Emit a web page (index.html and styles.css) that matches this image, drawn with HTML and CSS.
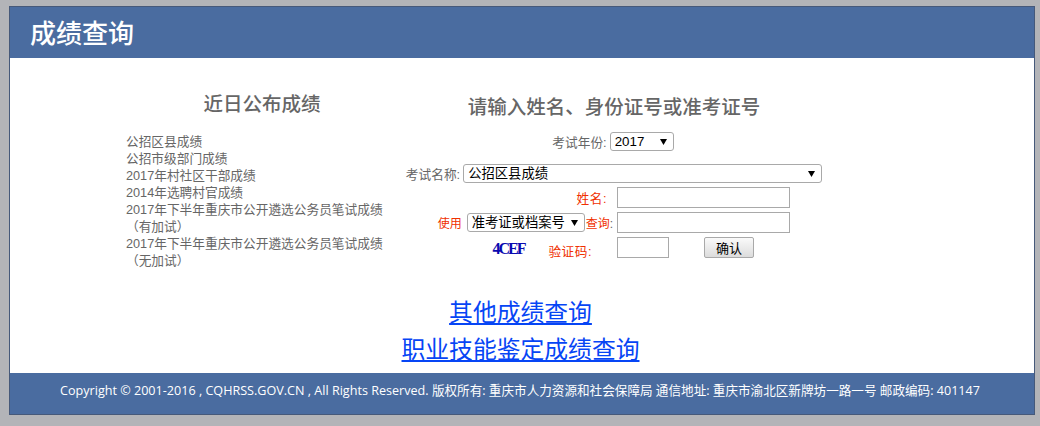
FILE: index.html
```html
<!DOCTYPE html>
<html lang="zh-CN">
<head>
    <meta charset="UTF-8">
    <title>成绩查询</title>
    <link rel="stylesheet" href="styles.css">
</head>
<body>
    <div class="wrapper">
        <header class="top-bar">
            <h1>成绩查询</h1>
        </header>
        <main>
            <div class="columns">
                <section class="recent">
                    <h3>近日公布成绩</h3>
                    <ul>
                        <li>公招区县成绩</li>
                        <li>公招市级部门成绩</li>
                        <li>2017年村社区干部成绩</li>
                        <li>2014年选聘村官成绩</li>
                        <li>2017年下半年重庆市公开遴选公务员笔试成绩（有加试）</li>
                        <li>2017年下半年重庆市公开遴选公务员笔试成绩（无加试）</li>
                    </ul>
                </section>
                <section class="query">
                    <h3>请输入姓名、身份证号或准考证号</h3>
                    <form>
                        <div class="form-center year-row">
                            <label for="year">考试年份:</label>
                            <select id="year" class="year-select">
                                <option>2017</option>
                            </select>
                        </div>
                        <div class="form-center name-row">
                            <label for="exam">考试名称:</label>
                            <select id="exam" class="exam-select">
                                <option>公招区县成绩</option>
                            </select>
                        </div>
                        <div class="form-row">
                            <div class="row-label"><span class="red name-label">姓名:</span></div>
                            <input type="text" class="text-input">
                        </div>
                        <div class="form-row">
                            <div class="row-label type-label">
                                <span class="red small">使用</span>
                                <select class="type-select">
                                    <option>准考证或档案号</option>
                                </select>
                                <span class="red small">查询<span class="grey">:</span></span>
                            </div>
                            <input type="text" class="text-input">
                        </div>
                        <div class="form-row">
                            <div class="row-label">
                                <span class="captcha">4CEF</span>
                                <span class="red code-label">验证码:</span>
                            </div>
                            <input type="text" class="code-input">
                            <button type="button">确认</button>
                        </div>
                    </form>
                </section>
            </div>
            <div class="more-links">
                <div><a href="#">其他成绩查询</a></div>
                <div><a href="#">职业技能鉴定成绩查询</a></div>
            </div>
        </main>
        <footer>
            Copyright © 2001-2016 , CQHRSS.GOV.CN , All Rights Reserved. 版权所有: 重庆市人力资源和社会保障局 通信地址: 重庆市渝北区新牌坊一路一号 邮政编码: 401147
        </footer>
    </div>
</body>
</html>
```

FILE: styles.css
```css
body {
    margin: 6px 5px 10px 9px;
    background-color: #b3b4b8;
    font-family: "Liberation Sans", "Noto Sans CJK SC", sans-serif;
    font-size: 12.7px;
    color: #666;
}

.wrapper {
    border: 1px solid #46597a;
    background-color: #fff;
}

.top-bar {
    background-color: #4a6ca0;
    height: 51px;
    padding-left: 20px;
}

.top-bar h1 {
    margin: 0;
    color: #fff;
    font-family: "Noto Sans CJK SC", sans-serif;
    font-size: 26px;
    line-height: 50px;
    font-weight: 500;
}

.columns {
    display: flex;
    padding-left: 116px;
}

.recent {
    width: 272px;
}

.recent h3 {
    margin: 0;
    padding-top: 33px;
    height: 43px;
    line-height: 24px;
    font-family: "Noto Sans CJK SC", sans-serif;
    font-size: 19.5px;
    font-weight: 500;
    text-align: center;
    color: #666;
}

.recent ul {
    list-style: none;
    margin: 0;
    padding: 0;
    width: 260px;
    line-height: 17px;
}

.query {
    width: 432px;
}

.query h3 {
    margin: 0;
    padding-top: 36px;
    height: 38px;
    line-height: 24px;
    font-family: "Noto Sans CJK SC", sans-serif;
    font-size: 19.5px;
    font-weight: 500;
    text-align: center;
    color: #666;
}

.form-center {
    display: flex;
    justify-content: center;
    align-items: center;
}

.form-center label {
    margin-right: 3px;
}

.year-row {
    height: 19px;
    padding-right: 2px;
}

.name-row {
    height: 19px;
    margin-top: 13px;
    margin-bottom: 4px;
}

select {
    appearance: none;
    font-family: "Liberation Sans", "Noto Sans CJK SC", sans-serif;
    font-size: 13.33px;
    line-height: 17px;
    color: #000;
    border: 1px solid #a9a9a9;
    border-radius: 3px;
    height: 19px;
    padding: 0 0 0 4px;
    box-sizing: border-box;
    background: #fff url("data:image/svg+xml,%3Csvg xmlns='http://www.w3.org/2000/svg' width='7' height='6'%3E%3Cpath d='M0 0h7L3.5 6z' fill='%23000'/%3E%3C/svg%3E") no-repeat right 6px center;
}

.year-select {
    width: 64px;
}

.exam-select {
    width: 359px;
}

.type-select {
    width: 118px;
    margin: 0 1px 0 5px;
}

.form-row {
    display: flex;
    align-items: center;
    height: 21px;
    margin-bottom: 4px;
}

.row-label {
    width: 219px;
    display: flex;
    justify-content: flex-end;
    align-items: center;
}

.type-label {
    padding-right: 4px;
    box-sizing: border-box;
}

.red {
    color: #f03000;
}

.small {
    font-size: 12px;
}

.grey {
    color: #666;
}

.name-label {
    margin-right: 10px;
    letter-spacing: 0.5px;
}

.captcha {
    font-family: "Liberation Serif", serif;
    font-weight: bold;
    font-size: 16px;
    letter-spacing: -2px;
    color: #0a0ab0;
    margin-right: 24px;
    margin-top: 3px;
}

.code-label {
    margin-right: 25px;
    margin-top: 6px;
    letter-spacing: 0.5px;
}

.text-input,
.code-input {
    box-sizing: border-box;
    height: 21px;
    border: 1px solid #a9a9a9;
    padding: 0;
}

.text-input {
    width: 173px;
}

.code-input {
    width: 52px;
}

button {
    box-sizing: border-box;
    width: 50px;
    height: 21px;
    margin-left: 35px;
    padding: 0;
    border: 1px solid #a9a9a9;
    border-radius: 2px;
    background: linear-gradient(#fafafa, #dcdcdc);
    font-family: "Noto Sans CJK SC", sans-serif;
    font-size: 13px;
    color: #000;
}

.more-links {
    margin-top: 22px;
    padding-right: 3px;
    padding-bottom: 7px;
    text-align: center;
    font-family: "Noto Sans CJK SC", sans-serif;
    font-size: 23.8px;
    line-height: 37px;
}

.more-links a {
    color: #0645f5;
}

footer {
    background-color: #4a6ca0;
    height: 41px;
    line-height: 35px;
    padding-right: 4px;
    text-align: center;
    color: #fff;
    font-family: "Open Sans", "Noto Sans CJK SC", sans-serif;
    font-size: 12.6px;
}
```
